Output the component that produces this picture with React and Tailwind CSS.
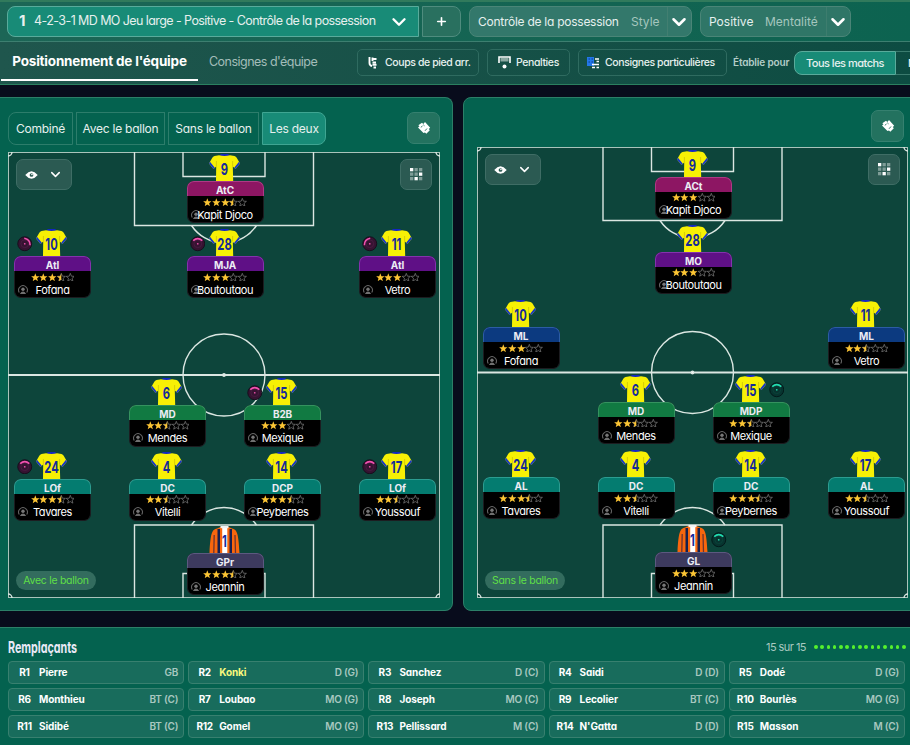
import { Plus, ChevronDown } from 'lucide-react';

const withBall = [
  { x: 178.5, y: 29, no: 9, role: 'AtC', name: 'Kapit Djoco', stars: 3.5, tone: 'pink' },
  { x: 6, y: 104, no: 10, role: 'AtI', name: 'Fofana', stars: 3.5, tone: 'purple', badge: 'left', turn: 50 },
  { x: 178.5, y: 104, no: 28, role: 'MJA', name: 'Boutoutaou', stars: 3, tone: 'purple', badge: 'left', turn: 0 },
  { x: 351, y: 104, no: 11, role: 'AtI', name: 'Vetro', stars: 3, tone: 'purple', badge: 'left', turn: -50 },
  { x: 121, y: 252.5, no: 6, role: 'MD', name: 'Mendes', stars: 2.5, tone: 'green' },
  { x: 236, y: 252.5, no: 15, role: 'B2B', name: 'Mexique', stars: 3, tone: 'green', badge: 'left', turn: 0 },
  { x: 6, y: 326.5, no: 24, role: 'LOf', name: 'Tavares', stars: 3.5, tone: 'teal', badge: 'left', turn: 0 },
  { x: 121, y: 326.5, no: 4, role: 'DC', name: 'Vitelli', stars: 2.5, tone: 'teal' },
  { x: 236, y: 326.5, no: 14, role: 'DCP', name: 'Peybernes', stars: 3.5, tone: 'teal' },
  { x: 351, y: 326.5, no: 17, role: 'LOf', name: 'Youssouf', stars: 2.5, tone: 'teal', badge: 'left', turn: 0 },
  { x: 178.5, y: 401, no: 1, role: 'GPr', name: 'Jeannin', stars: 3.5, tone: 'slate', keeper: true },
];

const withoutBall = [
  { x: 178, y: 29.5, no: 9, role: 'ACt', name: 'Kapit Djoco', stars: 3, tone: 'pink' },
  { x: 178, y: 104.5, no: 28, role: 'MO', name: 'Boutoutaou', stars: 3, tone: 'purple' },
  { x: 5.5, y: 180, no: 10, role: 'ML', name: 'Fofana', stars: 3, tone: 'blue' },
  { x: 351, y: 180, no: 11, role: 'ML', name: 'Vetro', stars: 2.5, tone: 'blue' },
  { x: 120.5, y: 255, no: 6, role: 'MD', name: 'Mendes', stars: 2.5, tone: 'green' },
  { x: 235.5, y: 255, no: 15, role: 'MDP', name: 'Mexique', stars: 2.5, tone: 'green', badge: 'right', turn: 0 },
  { x: 5.5, y: 330, no: 24, role: 'AL', name: 'Tavares', stars: 3.5, tone: 'teal' },
  { x: 120.5, y: 330, no: 4, role: 'DC', name: 'Vitelli', stars: 2.5, tone: 'teal' },
  { x: 235.5, y: 330, no: 14, role: 'DC', name: 'Peybernes', stars: 3.5, tone: 'teal' },
  { x: 351, y: 330, no: 17, role: 'AL', name: 'Youssouf', stars: 2.5, tone: 'teal' },
  { x: 178, y: 405, no: 1, role: 'GL', name: 'Jeannin', stars: 3, tone: 'slate', keeper: true, badge: 'right', turn: 0 },
];

const subs = [
  ['R1', 'Pierre', 'GB'], ['R2', 'Konki', 'D (G)'], ['R3', 'Sanchez', 'D (C)'], ['R4', 'Saidi', 'D (D)'], ['R5', 'Dodé', 'D (G)'],
  ['R6', 'Monthieu', 'BT (C)'], ['R7', 'Loubao', 'MO (G)'], ['R8', 'Joseph', 'MO (C)'], ['R9', 'Lecolier', 'BT (C)'], ['R10', 'Bourlès', 'MO (G)'],
  ['R11', 'Sidibé', 'BT (C)'], ['R12', 'Gomel', 'MO (G)'], ['R13', 'Pellissard', 'M (C)'], ['R14', "N'Gatta", 'D (D)'], ['R15', 'Masson', 'M (C)'],
];

const tones = {
  pink: 'bg-[#8d1663] border-[#ad3a86]',
  purple: 'bg-[#5f1086] border-[#8432ad]',
  blue: 'bg-[#0c3a80] border-[#2c5ca4]',
  green: 'bg-[#117a42] border-[#35925f]',
  teal: 'bg-[#047c70] border-[#2c9c90]',
  slate: 'bg-[#3d3a5e] border-[#5c5980]',
};

const STAR = 'M5 0.4 6.3 3.7 9.8 3.9 7.1 6.1 8 9.5 5 7.6 2 9.5 2.9 6.1 0.2 3.9 3.7 3.7Z';

function Stars({ value }) {
  return (
    <div className="flex h-[9px] justify-center gap-[.2px]">
      {[0, 1, 2, 3, 4].map((i) => (
        <svg key={i} viewBox="0 0 10 10" className="h-[8.6px] w-[8.6px]">
          {value < i + 1 && <path d={STAR} fill="none" stroke="#828282" strokeWidth="0.8" />}
          {value >= i + 1 && <path d={STAR} fill="#fcc534" />}
          {value === i + 0.5 && <path d="M5 0.4 3.7 3.7 0.2 3.9 2.9 6.1 2 9.5 5 7.6Z" fill="#fcc534" />}
        </svg>
      ))}
    </div>
  );
}

function Shirt({ keeper }) {
  if (keeper) {
    return (
      <svg viewBox="0 0 31 27" className="h-[27px] w-[31px]">
        <path d="M8 2.5C3 3.5 1.5 7 .5 27H30.5C29.5 7 28 3.5 23 2.5L19 .8H12Z" fill="#f8660d" />
        <path d="M8.5 3H11V27H8.5ZM20.5 3H23V27H20.5Z" fill="#16204f" />
        <path d="M13.2 1H18.3V27H13.2Z" fill="#fff" />
        <path d="M11.5 0h8v2.2h-8Z" fill="#f3f3f3" />
        <path d="M5.2 9 4.8 27M26 9 26.5 27" stroke="#6d3430" strokeWidth="1.3" />
      </svg>
    );
  }
  return (
    <svg viewBox="0 0 31 27" className="h-[27px] w-[31px]">
      <path d="M11.5 0h8l.5 2.5h-9Z" fill="#1227c4" />
      <path d="M10 1.2 5.5 2Q4 2.4 3.3 3.8L0 9.500 4.500 15 7.200 12.500 7 27H24.200L23.800 12.500 26.500 15 31 9.500 27.700 3.800Q27 2.400 25.500 2L21 1.200Q15.500 2.600 10 1.200Z" fill="#f7f005" />
      <path d="M0 9.5 4.5 15 5.8 13.800 1 7.800ZM31 9.500 26.500 15 25.200 13.800 30 7.800Z" fill="#1636c8" />
      <path d="M7.4 12.5V7M23.600 12.500V7" stroke="#c9bd0a" strokeWidth=".7" />
    </svg>
  );
}

function Badge({ side, turn }) {
  const pink = side === 'left';
  return (
    <svg
      viewBox="0 0 16 16"
      className={`absolute -top-[20px] h-[15.5px] w-[15.5px] ${pink ? 'left-[3px]' : 'left-[56px]'}`}
    >
      <circle cx="8" cy="8" r="7.2" fill={pink ? '#361331' : '#07342f'} stroke={pink ? '#170d1d' : '#03191a'} strokeWidth="1" />
      <circle cx="8" cy="8" r="4" fill="none" stroke={pink ? '#4d1d45' : '#0a463d'} strokeWidth=".8" />
      <path
        d="M3.3 4.7Q8 .8 12.7 4.7"
        fill="none"
        stroke={pink ? '#f352b1' : '#22ddb0'}
        strokeWidth="1.6"
        transform={`rotate(${turn} 8 8)`}
      />
      <circle cx="8" cy="8" r=".9" fill={pink ? '#f352b1' : '#22ddb0'} />
    </svg>
  );
}

function Player({ player }) {
  return (
    <div className="absolute w-[77px]" style={{ left: player.x, top: player.y }}>
      <div className="absolute -top-[27px] left-[22px] h-[27px] w-[31px]">
        <Shirt keeper={player.keeper} />
        <span className="absolute inset-x-0 top-[6px] scale-x-[.7] text-center text-[16px] leading-[18px] font-bold text-[#142a9a]">
          {player.no}
        </span>
      </div>
      {player.badge && <Badge side={player.badge} turn={player.turn} />}
      <div className="h-[42px] rounded-[7px] border-x border-b border-[#1c1c20] bg-black">
        <div className={`-mx-px h-[15px] rounded-t-[7px] border-x border-t text-center text-[10px] leading-[16px] font-bold tracking-[-0.1px] text-[#ececf4] ${tones[player.tone]}`}>
          {player.role}
        </div>
        <div className="pt-[1.5px]">
          <Stars value={player.stars} />
        </div>
        <div className="relative mt-px">
          <svg viewBox="0 0 10 10" className="absolute top-[2px] left-[3px] h-[10px] w-[10px]">
            <path d="M1.3 7.5A4.4 4.4 0 1 1 8.7 7.5" fill="none" stroke="#616161" strokeWidth="1.1" />
            <circle cx="5" cy="4.3" r="1.7" fill="#777" />
            <path d="M1.8 9Q5 4.2 8.2 9Z" fill="#707070" />
          </svg>
          <div className="relative text-center text-[11px] leading-[15px] tracking-[-0.4px] whitespace-nowrap text-white">{player.name}</div>
        </div>
      </div>
    </div>
  );
}

function Markings({ w, h, mid }) {
  const c = w / 2;
  return (
    <svg width={w} height={h} viewBox={`0 0 ${w} ${h}`} className="absolute inset-0" fill="none" stroke="#dbe7e2" strokeWidth="1.4">
      <rect x=".5" y=".5" width={w - 1} height={h - 1} strokeWidth="1" stroke="#a9c4bb" />
      <path d={`M0 ${mid}H${w}`} strokeWidth="2" />
      <circle cx={c} cy={mid} r="41" />
      <circle cx={c} cy={mid} r="1.2" fill="#fff" />
      <path d={`M${c - 89.5} 0V73.5H${c + 89.5}V0M${c - 41} 0V24.5H${c + 41}V0`} />
      <path d={`M${c - 89.5} ${h}V${h - 73}H${c + 89.5}V${h}M${c - 41} ${h}V${h - 24.5}H${c + 41}V${h}`} />
      <path d={`M${c - 32.5} 73.5A39 39 0 0 0 ${c + 32.5} 73.5`} />
      <path d={`M${c - 32.5} ${h - 73}A39 39 0 0 1 ${c + 32.5} ${h - 73}`} />
      <path d={`M4 0A4 4 0 0 1 0 4M${w - 4} 0A4 4 0 0 0 ${w} 4M0 ${h - 4}A4 4 0 0 1 4 ${h}M${w} ${h - 4}A4 4 0 0 0 ${w - 4} ${h}`} />
    </svg>
  );
}

function Eye() {
  return (
    <svg viewBox="0 0 14 9" className="h-[8px] w-[13px]">
      <path d="M0 4.5Q7-3.8 14 4.5Q7 12.8 0 4.5Z" fill="#fff" />
      <circle cx="7" cy="4.5" r="2.1" fill="#2b5a52" />
      <circle cx="7.5" cy="4" r=".9" fill="#fff" />
    </svg>
  );
}

function DotGrid() {
  const lit = [0, 5, 7];
  return (
    <svg viewBox="0 0 13 13" className="h-[13px] w-[13px]">
      {[0, 1, 2, 3, 4, 5, 6, 7, 8].map((i) => (
        <rect key={i} x={(i % 3) * 4.5} y={Math.floor(i / 3) * 4.5} width="3.3" height="3.3" fill={lit.includes(i) ? '#fff' : '#7f9d97'} />
      ))}
    </svg>
  );
}

function SwapButton() {
  return (
    <button className="flex h-[32px] w-[33px] items-center justify-center rounded-[7px] border border-[#35806f] bg-[#23725f]">
      <svg viewBox="0 0 14 14" className="h-[14px] w-[14px]">
        <path d="M5 1.8 6.300 3 8 1 13.200 6.800 11.800 8 12.800 9.300 9.300 12.800 8 11.500 6.500 12 1 6.500 2.500 5.300 1.300 4.300 3.500 2.800Z" fill="#fff" />
        <path d="M3.800 6.300 5.500 5M8 9.800 10 7.500M6.300 3.800 7.500 4.800" stroke="#23725f" strokeWidth=".9" />
      </svg>
    </button>
  );
}

function Pitch({ w, h, mid, players, label }) {
  return (
    <div className="relative bg-[#0d453b]" style={{ width: w, height: h }}>
      <Markings w={w} h={h} mid={mid} />
      <div className="relative flex h-full flex-col justify-between">
        <div className="flex justify-between py-[7px] pr-[8px] pl-[8px]">
          <button className="flex h-[31px] w-[56px] items-center gap-[10px] rounded-[7px] border border-[#3f6d65] bg-[#2b5a52] pl-[8px]">
            <Eye />
            <ChevronDown className="h-[15px] w-[15px] text-white" strokeWidth={2.4} />
          </button>
          <button className="flex h-[31px] w-[32px] items-center justify-center rounded-[7px] border border-[#3f6d65] bg-[#2b5a52]">
            <DotGrid />
          </button>
        </div>
        <div className="pb-[8px] pl-[8px]">
          <span className="flex h-[19px] w-[80px] items-center justify-center rounded-full bg-[#336c5e] text-[10.5px] tracking-[-0.28px] whitespace-nowrap text-[#5fdf47]">
            {label}
          </span>
        </div>
      </div>
      {players.map((p) => (
        <Player key={p.role + p.no} player={p} />
      ))}
    </div>
  );
}

export default function App() {
  return (
    <div className="flex h-[745px] w-[910px] flex-col overflow-hidden bg-[#080c1c] font-['Inter','Noto_Sans',sans-serif] text-[#e6f0ee] [font-feature-settings:'cv11']">
      {/* Tactic bar */}
      <div className="flex h-[42px] shrink-0 items-start border-t-2 border-b border-t-[#317a5c] border-b-[#3d7f70] bg-linear-to-r from-[#1c6656] to-[#0c6350] pt-[4px] pl-[7px] text-[12px]">
        <button className="flex h-[31px] w-[412px] items-center rounded-l-[8px] border border-[#59ab9b] bg-[#188b77] pl-[11px]">
          <span className="w-[15px] text-left text-[15px] font-bold">1</span>
          <span className="w-[354px] text-left text-[12.5px] tracking-[-0.58px] whitespace-nowrap">
            4-2-3-1 MD MO Jeu large - Positive - Contrôle de la possession
          </span>
          <ChevronDown className="h-[22px] w-[22px] text-white" strokeWidth={2.6} />
        </button>
        <button className="ml-[3px] flex h-[31px] w-[39px] items-center justify-center rounded-r-[8px] border border-[#4f8c7e] bg-[#29705f]">
          <Plus className="h-[13px] w-[13px] text-white" strokeWidth={3} />
        </button>
        <div className="ml-[8px] flex h-[31px] w-[223px] items-center rounded-[8px] border border-[#4a8577] bg-[#33786b] pl-[8px]">
          <span className="w-[153px] tracking-[-0.26px] whitespace-nowrap">Contrôle de la possession</span>
          <span className="w-[36px] text-[#a5c6be]">Style</span>
          <span className="flex h-full items-center border-l border-[#427f71]">
            <ChevronDown className="h-[22px] w-[22px] text-white" strokeWidth={2.8} />
          </span>
        </div>
        <div className="ml-[8px] flex h-[31px] w-[151px] items-center rounded-[8px] border border-[#4a8577] bg-[#2f7667] pl-[8px]">
          <span className="w-[56px]">Positive</span>
          <span className="w-[61px] text-[#a5c6be]">Mentalité</span>
          <span className="flex h-full items-center border-l border-[#3d7d6e]">
            <ChevronDown className="h-[22px] w-[22px] text-white" strokeWidth={2.8} />
          </span>
        </div>
      </div>

      {/* Tabs and set pieces */}
      <div className="flex h-[43px] shrink-0 border-b border-[#2b8060] bg-linear-to-r from-[#1f564d] to-[#0d4c42] pl-px">
        <div className="flex h-[39px] w-[197px] shrink-0 justify-center border-b-2 border-white pt-[9px] text-[13.5px] leading-[20px] font-bold tracking-[-0.2px] whitespace-nowrap text-white">
          Positionnement de l'équipe
        </div>
        <div className="w-[159px] shrink-0 pt-[10px] pl-[11px] text-[12.5px] leading-[20px] tracking-[-0.52px] whitespace-nowrap text-[#a3bdb9]">
          Consignes d'équipe
        </div>
        <div className="flex shrink-0 items-start gap-[8px] pt-[7px] text-[10.5px] font-medium tracking-[-0.4px] whitespace-nowrap">
          <button className="flex h-[27px] w-[122px] items-center rounded-[5px] border border-[#2f6b60] pl-[9px]">
            <svg viewBox="0 0 12 14" className="mr-[6px] h-[14px] w-[12px] shrink-0">
              <path d="M2.5 1V7Q2.5 9.500 5 10M5 3H9.500M5.500 1.500V5M5.500 6.500H9M5.500 8.800H9.500M6.500 11.500H9" stroke="#fff" strokeWidth="1.9" fill="none" />
            </svg>
            Coups de pied arr.
          </button>
          <button className="flex h-[27px] w-[83px] items-center rounded-[5px] border border-[#2f6b60] pl-[10px]">
            <svg viewBox="0 0 13 13" className="mr-[5px] h-[13px] w-[13px] shrink-0">
              <path d="M1 7V1H12V7" stroke="#fff" strokeWidth="1.6" fill="none" />
              <path d="M2.5 2H10.5V5.5H2.5Z" fill="#8aa9a2" />
              <circle cx="6.5" cy="10.5" r="2" fill="#fff" />
            </svg>
            Penalties
          </button>
          <button className="flex h-[27px] w-[149px] items-center rounded-[5px] border border-[#2f6b60] pl-[8px]">
            <svg viewBox="0 0 13 13" className="mr-[5px] h-[13px] w-[13px] shrink-0">
              <path d="M0 1H7V10H0Z" fill="#2377e8" />
              <path d="M1.5 3H3M4.5 3H6M1.5 6H3M4.5 6H6" stroke="#0b3f8f" strokeWidth="1.2" />
              <path d="M8 3H12M9.5 5.5H12M5 8.5H12M5 11.5H8M9.5 11.5H12" stroke="#fff" strokeWidth="1.7" />
            </svg>
            Consignes particulières
          </button>
        </div>
        <span className="w-[67px] shrink-0 pt-[10px] pl-[6px] text-[10px] leading-[21px] font-semibold tracking-[-0.15px] whitespace-nowrap text-[#b4cdc8]">
          Établie pour
        </span>
        <div className="flex shrink-0 pt-[9px] text-[11px] font-medium tracking-[-0.5px]">
          <button className="h-[24px] w-[102px] rounded-l-[8px] border border-[#59ab9b] bg-[#188b77]">Tous les matchs</button>
          <button className="h-[24px] w-[80px] border-y border-[#3b7b6e] pl-[12px] text-left">Match</button>
        </div>
      </div>

      {/* Formations */}
      <div className="mt-[12px] flex h-[514px] w-[930px] shrink-0 gap-[10px]">
        <div className="w-[453px] shrink-0 rounded-r-[8px] border border-l-0 border-[#2c7f68] bg-[#04624f] pl-[8px]">
          <div className="flex h-[54px] pt-[14px]">
            <div className="flex gap-[3px] text-[12px] tracking-[-0.25px] whitespace-nowrap">
              <button className="h-[33px] w-[65px] rounded-l-[8px] border border-[#2d7d6b]">Combiné</button>
              <button className="h-[33px] w-[89px] border border-[#2d7d6b]">Avec le ballon</button>
              <button className="h-[33px] w-[91px] border border-[#2d7d6b]">Sans le ballon</button>
              <button className="h-[33px] w-[64px] rounded-r-[8px] border border-[#3fa592] bg-[#188b77]">Les deux</button>
            </div>
            <div className="ml-[81px]">
              <SwapButton />
            </div>
          </div>
          <Pitch w={432} h={446} mid={223} players={withBall} label="Avec le ballon" />
        </div>
        <div className="w-[460px] shrink-0 rounded-l-[8px] border border-[#2c7f68] bg-[#04624f] pl-[13px]">
          <div className="flex h-[49px] pt-[12px] pl-[394px]">
            <SwapButton />
          </div>
          <Pitch w={431} h={451} mid={225.5} players={withoutBall} label="Sans le ballon" />
        </div>
      </div>

      {/* Bench */}
      <div className="mt-[16px] h-[140px] shrink-0 border-t border-[#2c8068] bg-[#04624f] pl-[8px]">
        <div className="flex h-[33px] items-center pt-[5px]">
          <div className="w-[758px]">
            <h2 className="w-fit origin-left scale-x-[.67] text-[16px] leading-[20px] font-bold text-[#e9e9f6]">Remplaçants</h2>
          </div>
          <span className="w-[48px] text-[11px] tracking-[-0.55px] whitespace-nowrap text-[#a9c9c0]">15 sur 15</span>
          <div className="flex gap-[2.8px]">
            {subs.map(([id]) => (
              <span key={id} className="h-[4px] w-[3.5px] rounded-full bg-[#55f02d]" />
            ))}
          </div>
        </div>
        <div className="grid w-[897px] grid-cols-5 gap-x-[4px] gap-y-[4px]">
          {subs.map(([id, name, pos]) => (
            <div key={id} className="flex h-[23px] items-center rounded-[4px] border-[1.5px] border-[#38806f] bg-[#186c5c] pr-[5px] text-[10px]">
              <span className="w-[30px] pl-px text-center font-bold tracking-[-0.2px] text-white">{id}</span>
              <span className={`flex-1 font-bold tracking-[-0.1px] ${name === 'Konki' ? 'text-[#f8f87c]' : 'text-white'}`}>{name}</span>
              <span className="font-semibold tracking-[-0.2px] text-[#a8c8c0]">{pos}</span>
            </div>
          ))}
        </div>
      </div>
    </div>
  );
}
